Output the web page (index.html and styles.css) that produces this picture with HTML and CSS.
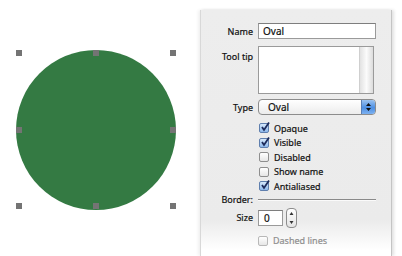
FILE: index.html
```html
<!DOCTYPE html>
<html>
<head>
  <title>Oval inspector</title>
  <link rel="stylesheet" href="styles.css">
</head>
<body>
  <div class="canvas">
    <div class="shape">
      <div class="oval"></div>
      <span class="handle h-tl"></span>
      <span class="handle h-tc"></span>
      <span class="handle h-tr"></span>
      <span class="handle h-ml"></span>
      <span class="handle h-mr"></span>
      <span class="handle h-bl"></span>
      <span class="handle h-bc"></span>
      <span class="handle h-br"></span>
    </div>
  </div>

  <div class="inspector">
    <div class="row row-name">
      <label>Name</label>
      <div class="field">Oval</div>
    </div>

    <div class="row row-tip">
      <label>Tool tip</label>
      <div class="textarea"><span class="scroll"></span></div>
    </div>

    <div class="row row-type">
      <label>Type</label>
      <div class="popup">
        <span>Oval</span>
        <span class="popup-arrows">
          <svg width="7" height="10" viewBox="0 0 7 10"><path d="M3.5 1 L6 4 L1 4 Z M3.5 9 L6 6 L1 6 Z" fill="#111"/></svg>
        </span>
      </div>
    </div>

    <div class="checks">
      <div class="check"><span class="box on"><svg width="10" height="10" viewBox="0 0 10 10"><path d="M2 5 L4 8 L9 0.5" fill="none" stroke="#1c2a5a" stroke-width="1.8"/></svg></span>Opaque</div>
      <div class="check"><span class="box on"><svg width="10" height="10" viewBox="0 0 10 10"><path d="M2 5 L4 8 L9 0.5" fill="none" stroke="#1c2a5a" stroke-width="1.8"/></svg></span>Visible</div>
      <div class="check"><span class="box"></span>Disabled</div>
      <div class="check"><span class="box"></span>Show name</div>
      <div class="check"><span class="box on"><svg width="10" height="10" viewBox="0 0 10 10"><path d="M2 5 L4 8 L9 0.5" fill="none" stroke="#1c2a5a" stroke-width="1.8"/></svg></span>Antialiased</div>
    </div>

    <div class="row row-border">
      <label class="label-wide">Border:</label>
      <div class="rule"></div>
    </div>

    <div class="row row-size">
      <label>Size</label>
      <div class="size-ctrl">
        <div class="field small">0</div>
        <div class="stepper">
          <svg width="11" height="20" viewBox="0 0 11 20"><path d="M5.5 4 L7.5 7 L3.5 7 Z M5.5 16 L7.5 13 L3.5 13 Z" fill="#333"/></svg>
        </div>
      </div>
    </div>

    <div class="check dashed"><span class="box off"></span>Dashed lines</div>
  </div>
</body>
</html>
```

FILE: styles.css
```css
body {
  margin: 0;
  width: 402px;
  height: 256px;
  display: flex;
  background-color: #fff;
  font-family: "Noto Sans", "DejaVu Sans", sans-serif;
  font-size: 9px;
  color: #111;
  -webkit-text-stroke: 0.2px;
  overflow: hidden;
}

.canvas {
  width: 200px;
  padding: 50px 0 0 16px;
  box-sizing: border-box;
}

.shape {
  position: relative;
  width: 160px;
  height: 160px;
}

.oval {
  width: 160px;
  height: 160px;
  border-radius: 50%;
  background-color: #347a43;
}

.handle {
  position: absolute;
  width: 6px;
  height: 6px;
  background-color: #747474;
}
.h-tl { left: 0; top: 0; }
.h-tc { left: 77px; top: 0; }
.h-tr { left: 154px; top: 0; }
.h-ml { left: 0; top: 77px; }
.h-mr { left: 154px; top: 77px; }
.h-bl { left: 0; top: 153px; }
.h-bc { left: 77px; top: 153px; }
.h-br { left: 154px; top: 153px; }

.inspector {
  margin-top: 10px;
  width: 192px;
  height: 246px;
  padding: 13px 15px 0 0;
  box-sizing: border-box;
  background: linear-gradient(to bottom, #ededed 0, #ebebeb 210px, #fff 240px);
  border-left: 1px solid #d8d8d8;
  border-right: 1px solid #c4c4c4;
  box-shadow: -2px 0 3px rgba(0, 0, 0, 0.06), 2px 0 3px rgba(0, 0, 0, 0.12);
}

.row {
  display: grid;
  grid-template-columns: 52px 1fr;
  column-gap: 5px;
  align-items: center;
}

.row label {
  text-align: right;
}

.field {
  height: 16px;
  box-sizing: border-box;
  border: 1px solid #9a9a9a;
  border-top-color: #7e7e7e;
  background-color: #fff;
  padding: 0 4px;
  line-height: 14px;
  font-size: 10px;
}

.row-tip {
  margin-top: 7px;
  align-items: start;
}
.row-tip label {
  padding-top: 4px;
}

.textarea {
  height: 48px;
  margin-right: 2px;
  box-sizing: border-box;
  border: 1px solid #9a9a9a;
  background-color: #fff;
  display: flex;
  justify-content: flex-end;
}

.scroll {
  width: 13px;
  background: linear-gradient(to right, #e2e2e2, #fbfbfb 50%, #dcdcdc);
  border-left: 1px solid #cfcfcf;
}

.row-type {
  margin-top: 5px;
}

.popup {
  height: 16px;
  box-sizing: border-box;
  border: 1px solid #8c8c8c;
  border-radius: 4px;
  background: linear-gradient(to bottom, #fff, #ececec);
  display: flex;
  justify-content: space-between;
  align-items: center;
  padding-left: 9px;
  font-size: 10px;
  overflow: hidden;
}

.popup-arrows {
  width: 13px;
  height: 14px;
  display: flex;
  align-items: center;
  justify-content: center;
  background: linear-gradient(to bottom, #9cc3f0, #4d8fe3 55%, #7db1f0);
  border-left: 1px solid #5a7fb5;
}

.checks {
  margin: 6px 0 0 58px;
}

.check {
  height: 14.5px;
  display: flex;
  align-items: center;
  gap: 5px;
}

.box {
  width: 10px;
  height: 10px;
  box-sizing: border-box;
  border: 1px solid #8e8e8e;
  border-radius: 2px;
  background: linear-gradient(to bottom, #fff, #e6e6e6);
  position: relative;
}

.box.on {
  border-color: #5f7fae;
  background: linear-gradient(to bottom, #d6e8fb, #8db8ec);
}

.box svg {
  position: absolute;
  left: 0;
  top: -2px;
}

.row-border {
  margin-top: -1px;
}
.label-wide {
  margin-left: -20px;
}

.rule {
  height: 1px;
  background-color: #8a8a8a;
  border-bottom: 1px solid #fafafa;
  margin-top: 2px;
}

.row-size {
  margin-top: 2px;
}

.size-ctrl {
  display: flex;
  align-items: center;
  gap: 3px;
}

.field.small {
  width: 25px;
  padding-left: 5px;
}

.stepper {
  width: 11px;
  height: 20px;
  box-sizing: border-box;
  border: 1px solid #8c8c8c;
  border-radius: 4px;
  background: linear-gradient(to bottom, #fff, #e4e4e4);
  display: flex;
}
.stepper svg {
  margin: -1px;
}

.dashed {
  margin: 6px 0 0 57px;
  color: #8f8f8f;
}
.box.off {
  border-color: #b8b8b8;
}
```
